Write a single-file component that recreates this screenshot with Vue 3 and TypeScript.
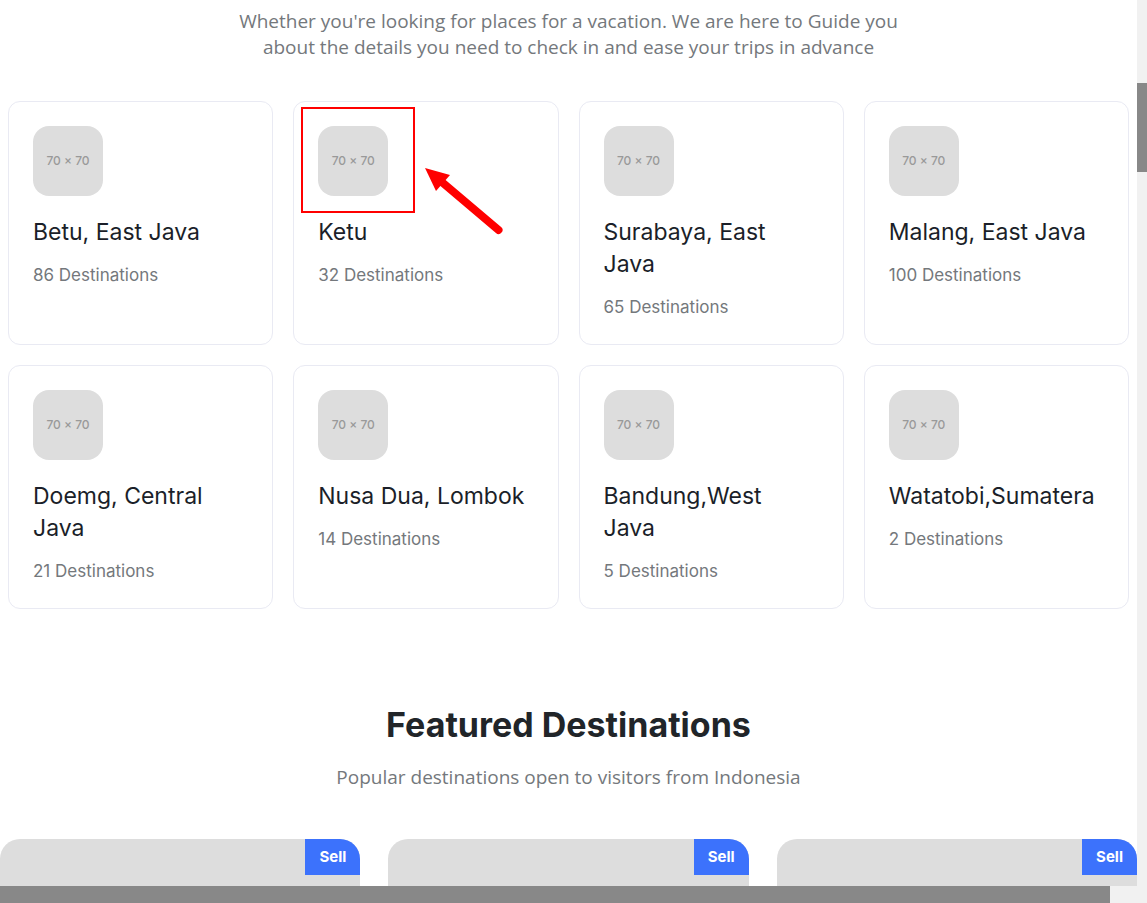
<script setup lang="ts">
interface Place {
  name: string
  count: number
  marked?: boolean
}

const places: Place[] = [
  { name: 'Betu, East Java', count: 86 },
  { name: 'Ketu', count: 32, marked: true },
  { name: 'Surabaya, East Java', count: 65 },
  { name: 'Malang, East Java', count: 100 },
  { name: 'Doemg, Central Java', count: 21 },
  { name: 'Nusa Dua, Lombok', count: 14 },
  { name: 'Bandung,West Java', count: 5 },
  { name: 'Watatobi,Sumatera', count: 2 },
]

const featured: string[] = ['Sell', 'Sell', 'Sell']
</script>

<template>
  <div class="window">
    <main class="page">
      <p class="lead">
        Whether you're looking for places for a vacation. We are here to Guide you<br />
        about the details you need to check in and ease your trips in advance
      </p>

      <section class="places">
        <article v-for="place in places" :key="place.name" class="place">
          <div class="thumb">70 × 70</div>
          <h3 class="name">{{ place.name }}</h3>
          <p class="count">{{ place.count }} Destinations</p>
          <template v-if="place.marked">
            <span class="frame"></span>
            <svg class="arrow" width="84" height="72" viewBox="0 0 84 72" aria-hidden="true">
              <path d="M2 2 L27 9 L13 25 Z" fill="#ff0000" />
              <path d="M20 17 L75.500 64" stroke="#ff0000" stroke-width="8" stroke-linecap="round" />
            </svg>
          </template>
        </article>
      </section>

      <section class="featured">
        <h2 class="heading">Featured Destinations</h2>
        <p class="lead">Popular destinations open to visitors from Indonesia</p>
        <div class="tiles">
          <article v-for="(label, i) in featured" :key="i" class="tile">
            <span class="badge">{{ label }}</span>
          </article>
        </div>
      </section>
    </main>
    <div class="vbar"><div class="vthumb"></div></div>
    <div class="hbar"><div class="hthumb"></div></div>
  </div>
</template>

<style>
body {
  margin: 0;
  overflow: hidden;
}
</style>

<style scoped>
.window {
  display: grid;
  grid-template-columns: minmax(0, 1fr) 10px;
  grid-template-rows: minmax(0, 1fr) 17px;
  height: 100vh;
  background: #fff;
  font-family: Inter, 'Liberation Sans', sans-serif;
}
.page {
  overflow: hidden;
  padding-top: 8px;
}
.lead {
  margin: 0;
  font-family: 'Open Sans', sans-serif;
  font-size: 19px;
  line-height: 26px;
  text-align: center;
  color: #74787c;
}
.places {
  display: grid;
  grid-template-columns: repeat(4, minmax(0, 1fr));
  gap: 20px;
  margin-top: 41px;
  padding: 0 8px;
}
.place {
  position: relative;
  padding: 24px;
  border: 1px solid #e9eaf3;
  border-radius: 12px;
}
.thumb {
  width: 70px;
  height: 70px;
  border-radius: 16px;
  background: #ddd;
  color: #999;
  font-size: 12px;
  font-weight: 500;
  line-height: 70px;
  text-align: center;
}
.name {
  margin: 20px 0 14px;
  font-size: 23px;
  font-weight: 400;
  line-height: 32px;
  color: #1b1f29;
}
.count {
  margin: 0;
  font-size: 17px;
  font-weight: 400;
  line-height: 26px;
  color: #74787c;
}
.frame {
  position: absolute;
  top: 5px;
  left: 7px;
  width: 110px;
  height: 102px;
  border: 2px solid #f00;
}
.arrow {
  position: absolute;
  top: 64px;
  left: 129px;
}
.featured {
  margin-top: 89px;
}
.heading {
  margin: 0 0 12px;
  font-size: 34px;
  font-weight: 700;
  line-height: 54px;
  text-align: center;
  color: #212529;
}
.tiles {
  display: grid;
  grid-template-columns: repeat(3, minmax(0, 1fr));
  gap: 28px;
  margin-top: 49px;
}
.tile {
  display: flex;
  justify-content: flex-end;
  align-items: flex-start;
  height: 240px;
  overflow: hidden;
  border-radius: 20px;
  background: #ddd;
}
.badge {
  padding: 0 14px;
  background: #3c72fc;
  color: #fff;
  font-size: 15px;
  font-weight: 700;
  line-height: 36px;
}
.vbar,
.hbar {
  background: #f1f1f1;
}
.vbar {
  padding-top: 83px;
}
.vthumb {
  height: 89px;
  background: #888;
}
.hbar {
  grid-column: 1 / -1;
  padding-right: 37px;
}
.hthumb {
  height: 100%;
  background: #888;
}
</style>
